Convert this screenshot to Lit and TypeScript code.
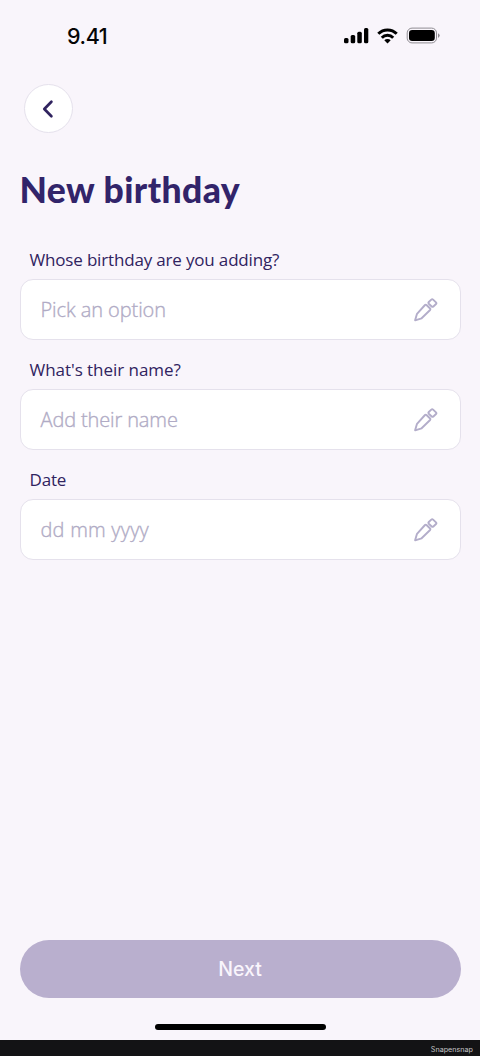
import { LitElement, html, css, svg } from "lit";
import { customElement, property } from "lit/decorators.js";

@customElement("status-bar")
class StatusBar extends LitElement {
  static styles = css`
    :host { display: flex; align-items: center; justify-content: space-between; height: 72px; padding: 0 40px 0 67px; box-sizing: border-box; }
    .time { font: 500 21.5px/26px Inter, sans-serif; letter-spacing: -0.4px; color: #050505; }
    svg { display: block; }
  `;
  render() {
    return html`
      <span class="time">9.41</span>
      <svg width="97" height="18" viewBox="343 27 97 18">
        <rect x="344" y="38" width="4.5" height="5.2" rx="1.5" />
        <rect x="350.7" y="35" width="4.5" height="8.2" rx="1.5" />
        <rect x="357.3" y="31.7" width="4.5" height="11.5" rx="1.5" />
        <rect x="364" y="28" width="4.3" height="15.2" rx="1.5" />
        <g fill="none" stroke="#000" stroke-width="3">
          <path d="M378.3 33.8a13 13 0 0 1 18.4 0" />
          <path d="M381.8 37.7a8 8 0 0 1 11.4 0" />
        </g>
        <path d="M384.3 40.3a4.5 4.5 0 0 1 6.4 0L387.5 43.6z" />
        <rect x="407.2" y="28.1" width="29.3" height="14.8" rx="4.8" fill="none" stroke="#8f8c92" />
        <rect x="409" y="30" width="25.8" height="11" rx="3.2" />
        <path d="M438 33.3q1.7.8 1.7 2.3T438 37.9z" fill="#8f8c92" />
      </svg>
    `;
  }
}

@customElement("form-field")
class FormField extends LitElement {
  @property() label = "";
  @property() hint = "";
  static styles = css`
    :host { display: block; height: 110px; }
    .label { height: 39px; padding: 8px 0 0 10px; box-sizing: border-box; font: 400 17px/24px "Open Sans", sans-serif; letter-spacing: var(--label-spacing, -0.17px); color: #30235f; white-space: nowrap; }
    .box { display: flex; align-items: center; justify-content: space-between; height: 61px; box-sizing: border-box; padding: 0 21.5px 0 20px; border: 1.3px solid #e5e1ec; border-radius: 13px; background: #fff; }
    .hint { padding-top: 1px; font: 300 20px/28px "Open Sans", sans-serif; letter-spacing: var(--hint-spacing, -0.08px); color: #b0abc5; -webkit-text-stroke: 0.35px #b0abc5; white-space: nowrap; }
    svg { display: block; }
  `;
  render() {
    return html`
      <div class="label">${this.label}</div>
      <div class="box">
        <span class="hint">${this.hint}</span>
        <svg width="24" height="24" viewBox="0 0 24 24" fill="none" stroke="#b3adca" stroke-width="1.9" stroke-linejoin="round">
          ${svg`<path d="M1.1 22.3L3 15.8L11 7Q11.7 6.3 12.5 7L16.1 10.5Q16.8 11.2 16.1 12L7.6 20.3z" />
          <path d="M17.3 1.6Q18.2.8 19.1 1.6L22 4.4Q22.8 5.2 22 6L19.4 8.5Q18.5 9.2 17.7 8.5L14.8 5.7Q14 4.8 14.8 4z" />`}
        </svg>
      </div>
    `;
  }
}

@customElement("app-root")
class AppRoot extends LitElement {
  static styles = css`
    :host { display: flex; flex-direction: column; width: 480px; height: 1056px; background: #f9f5fb; overflow: hidden; }
    .back { display: grid; place-items: center; width: 49px; height: 49px; margin: 12px 0 0 24px; padding: 0 2px 0 0; box-sizing: border-box; border: 1.3px solid #e5e1ec; border-radius: 50%; background: #fff; }
    h1 { margin: 34px 0 0 19.5px; height: 73px; font: 900 35.5px/45px Lato, sans-serif; letter-spacing: 0.45px; color: #32246a; white-space: nowrap; }
    .form { flex: 1; padding: 0 19.5px; }
    .name { --label-spacing: -0.04px; --hint-spacing: -0.13px; }
    .date { --hint-spacing: 0.22px; }
    .next { height: 58px; margin: 0 19.5px; padding: 1px 0 0; border: 0; border-radius: 29px; background: #b9afce; color: #f9f5fc; font: 500 19.5px/57px Inter, sans-serif; }
    .home { height: 6px; width: 171px; margin: 26px 0 9.5px 155px; border-radius: 3px; background: #000; }
    .credit { height: 16.5px; box-sizing: border-box; padding: 1px 7px 0 0; background: #131315; color: #c6c6c8; text-align: right; font: 400 7.2px/17px Inter, sans-serif; }
  `;
  render() {
    return html`
      <status-bar></status-bar>
      <button class="back" aria-label="Back">
        <svg width="14" height="20" viewBox="0 0 14 20" fill="none" stroke="#30235f" stroke-width="2.7" stroke-linecap="round" stroke-linejoin="round"><path d="M10.4 2.7L3.3 10L10.4 17.3" /></svg>
      </button>
      <h1>New birthday</h1>
      <div class="form">
        <form-field label="Whose birthday are you adding?" hint="Pick an option"></form-field>
        <form-field class="name" label="What's their name?" hint="Add their name"></form-field>
        <form-field class="date" label="Date" hint="dd mm yyyy"></form-field>
      </div>
      <button class="next">Next</button>
      <div class="home"></div>
      <div class="credit">Snapensnap</div>
    `;
  }
}
